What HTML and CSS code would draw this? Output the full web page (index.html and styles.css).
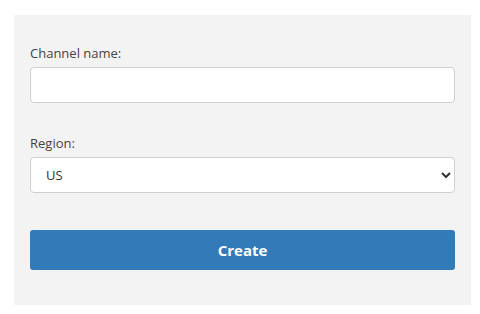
FILE: index.html
```html
<!DOCTYPE html>
<html>
<head>
<meta charset="utf-8">
<link rel="stylesheet" href="styles.css">
</head>
<body>
<div class="panel">
  <div class="group">
    <label class="label" for="name">Channel name:</label>
    <input class="field" id="name" type="text">
  </div>
  <div class="group group-region">
    <label class="label" for="region">Region:</label>
    <select class="field select" id="region">
      <option>US</option>
    </select>
  </div>
  <button class="btn" type="button">Create</button>
</div>
</body>
</html>
```
FILE: styles.css
```css
html, body {
  margin: 0;
  padding: 0;
  background: #ffffff;
}
body {
  font-family: "Open Sans", "Liberation Sans", sans-serif;
  font-size: 13px;
  color: #444;
}
.panel {
  box-sizing: border-box;
  margin: 15px 0 0 14px;
  width: 457px;
  height: 290px;
  background: #f3f3f3;
  padding: 29px 16px 0 16px;
  display: flex;
  flex-direction: column;
}
.group {
  display: flex;
  flex-direction: column;
}
.group-region {
  margin-top: 31px;
}
.label {
  display: block;
  line-height: 18px;
  height: 18px;
  margin-bottom: 5px;
  color: #444;
}
.field {
  box-sizing: border-box;
  width: 100%;
  height: 36px;
  border: 1px solid #cfcfcf;
  border-radius: 4px;
  background: #fff;
  font-family: "Open Sans", "Liberation Sans", sans-serif;
  font-size: 13px;
  color: #333;
  padding: 0 12px;
  margin: 0;
  outline: none;
}
.select {
  padding-left: 11px;
  padding-right: 4px;
}
.btn {
  margin-top: 37px;
  height: 40px;
  width: 100%;
  border: none;
  border-radius: 3px;
  background: #327bb8;
  color: #fff;
  font-family: "Open Sans", "Liberation Sans", sans-serif;
  font-weight: 700;
  font-size: 15px;
  padding: 0;
}
```
